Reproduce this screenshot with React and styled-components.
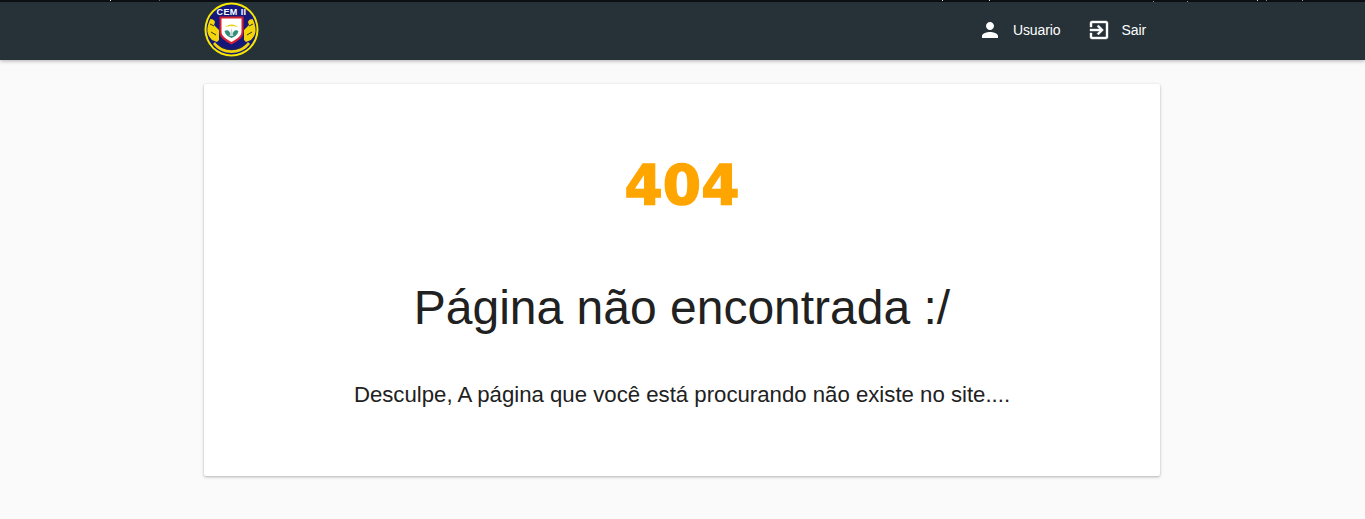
import React from 'react';
import styled, { createGlobalStyle } from 'styled-components';

const GlobalStyle = createGlobalStyle`
  html, body {
    margin: 0;
    padding: 0;
    height: 100%;
    overflow: hidden;
    background: #fafafa;
    font-family: "Liberation Sans", Arial, sans-serif;
  }
`;

const Page = styled.div`
  min-height: 519px;
  background: #fafafa;
`;

const Header = styled.header`
  height: 60px;
  display: flex;
  flex-direction: column;
  background: #263238;
  box-shadow: 0 1px 4px rgba(0, 0, 0, 0.3);
`;

// thin dark line on top of the bar, with the few light pixels it has
const TopLine = styled.div`
  flex: 0 0 2px;
  background-color: #0b0f12;
  background-repeat: no-repeat;
  background-size: 1px 1px;
  background-image:
    linear-gradient(#dfe8f5, #dfe8f5),
    linear-gradient(#5a6a9a, #5a6a9a),
    linear-gradient(#dfe8f5, #dfe8f5),
    linear-gradient(#dfe8f5, #dfe8f5),
    linear-gradient(#8a8f98, #8a8f98),
    linear-gradient(#8a8f98, #8a8f98),
    linear-gradient(#c8d4f0, #c8d4f0),
    linear-gradient(#8a8f98, #8a8f98),
    linear-gradient(#8fa0d8, #8fa0d8);
  background-position:
    110px 0,
    159px 0,
    942px 0,
    989px 0,
    1153px 1px,
    1187px 1px,
    1257px 0,
    1266px 0,
    1302px 0;
`;

const HeaderInner = styled.div`
  flex: 1;
  width: 956px;
  margin: 0 205px 0 204px;
  display: flex;
  align-items: center;
  justify-content: space-between;
`;

const Logo = styled.svg`
  width: 55px;
  height: 55px;
  margin-top: -4px;
  display: block;
`;

const Nav = styled.nav`
  display: flex;
  align-items: center;
  padding-right: 14px;
  gap: 26px;
  margin-top: -2px;
`;

const NavItem = styled.a`
  display: flex;
  align-items: center;
  gap: 11px;
  color: #fff;
  font-size: 14px;
  letter-spacing: -0.1px;
`;

const Main = styled.main`
  width: 956px;
  margin: 24px 205px 0 204px;
  height: 392px;
  box-sizing: border-box;
  padding-top: 68px;
  background: #fff;
  border-radius: 2px;
  box-shadow: 0 1px 3px rgba(0, 0, 0, 0.3);
  text-align: center;
  color: #212121;
`;

const Code = styled.h1`
  margin: 0;
  color: #ffa500;
  font-size: 55px;
  line-height: 66px;
  font-weight: 700;
  font-family: "DejaVu Sans", sans-serif;
  -webkit-text-stroke: 1.5px #ffa500;
`;

const Title = styled.h2`
  margin: 62px 0 0;
  font-size: 48px;
  line-height: 56px;
  font-weight: 400;
`;

const Message = styled.p`
  margin: 45px 0 0;
  font-size: 22.2px;
  line-height: 28px;
`;

const UserIcon = () => (
  <svg width="24" height="24" viewBox="0 0 24 24" fill="#fff">
    <path d="M12 12c2.210 0 4-1.790 4-4s-1.790-4-4-4-4 1.790-4 4 1.790 4 4 4zm0 2c-2.670 0-8 1.340-8 4v2h16v-2c0-2.660-5.330-4-8-4z" />
  </svg>
);

const ExitIcon = () => (
  <svg width="24" height="24" viewBox="0 0 24 24" fill="#fff" stroke="#fff" strokeWidth="0.4">
    <path d="M10.090 15.590L11.500 17l5-5-5-5-1.410 1.410L12.670 11H3v2h9.670l-2.580 2.590zM19 3H5c-1.110 0-2 .9-2 2v4h2V5h14v14H5v-4H3v4c0 1.100.89 2 2 2h14c1.100 0 2-.9 2-2V5c0-1.100-.9-2-2-2z" />
  </svg>
);

const CrestLogo = () => (
  <Logo viewBox="0 0 55 55">
    <circle cx="27.500" cy="27.500" r="27" fill="#f7ea00" />
    <circle cx="27.500" cy="27.500" r="25" fill="#14187a" />
    {/* side figures */}
    <path d="M3.500 30c-.5-4 1-10 3-13 2 0 4 1 4.500 3l-1 3 5 5v10l-2 2-5-2c-2-2-4-5-4.500-8z" fill="#f2d60a" />
    <path d="M51.500 30c.5-4-1-10-3-13-2 0-4 1-4.500 3l1 3-5 5v10l2 2 5-2c2-2 4-5 4.500-8z" fill="#f2d60a" />
    <path d="M6 22l4 2M49 22l-4 2M7 30l5 3M48 30l-5 3" stroke="#3a3320" strokeWidth="1" />
    {/* lower ribbon */}
    <path d="M11 40c8 11 25 11 33 0l2 2c-9 12-28 12-37 0z" fill="#f2d60a" />
    <path d="M14 42c7 7 20 7 27 0" fill="none" stroke="#3a3320" strokeWidth="1" strokeDasharray="1 1" />
    {/* shield */}
    <path d="M15.500 14.500h24V30c0 6-6 9-12 12.500C21.500 39 15.500 36 15.500 30z" fill="#d2202f" />
    <path d="M17.500 16.500h20V30c0 4.500-5 7-10 10-5-3-10-5.500-10-10z" fill="#fff" />
    <path d="M21 25c3-3.500 10-3.500 13 0-3-1-10-1-13 0z" fill="#e8d020" />
    <path d="M20.500 29c2-1 4-1 5 1l2 3 2-3c1-2 3-2 5-1-1 4-4 6-7 7-3-1-6-3-7-7z" fill="#2f8f7a" />
    <path d="M25.500 34l2-8 2 8z" fill="#c8d0d0" />
    <text x="27.500" y="12.500" textAnchor="middle" fontSize="9" letterSpacing="0.4" fontWeight="700" fill="#fff" fontFamily="Liberation Sans">CEM II</text>
  </Logo>
);

const App = () => (
  <Page>
    <GlobalStyle />
    <Header>
      <TopLine />
      <HeaderInner>
        <CrestLogo />
        <Nav>
          <NavItem><UserIcon />Usuario</NavItem>
          <NavItem><ExitIcon />Sair</NavItem>
        </Nav>
      </HeaderInner>
    </Header>
    <Main>
      <Code>404</Code>
      <Title>Página não encontrada :/</Title>
      <Message>Desculpe, A página que você está procurando não existe no site....</Message>
    </Main>
  </Page>
);

export default App;
